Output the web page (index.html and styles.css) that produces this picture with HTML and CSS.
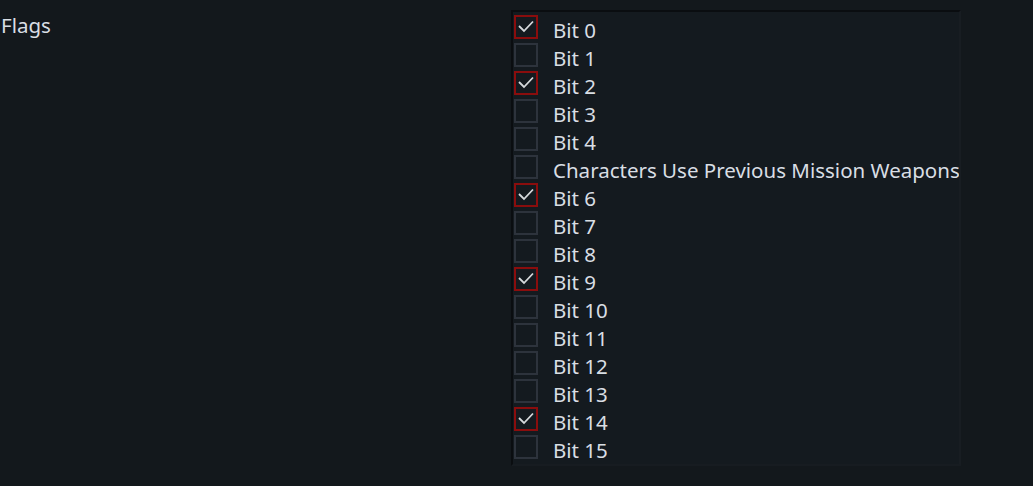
FILE: index.html
```html
<!DOCTYPE html>
<html>
<head>
<meta charset="utf-8">
<link rel="stylesheet" href="styles.css">
</head>
<body>
<div class="field">
  <div class="label">Flags</div>
  <div class="list">
    <label class="item"><span class="box checked"><svg viewBox="0 0 20 20"><polyline points="3,9 8,14 17,4.5"/></svg></span><span class="text">Bit 0</span></label>
    <label class="item"><span class="box"></span><span class="text">Bit 1</span></label>
    <label class="item"><span class="box checked"><svg viewBox="0 0 20 20"><polyline points="3,9 8,14 17,4.5"/></svg></span><span class="text">Bit 2</span></label>
    <label class="item"><span class="box"></span><span class="text">Bit 3</span></label>
    <label class="item"><span class="box"></span><span class="text">Bit 4</span></label>
    <label class="item"><span class="box"></span><span class="text">Characters Use Previous Mission Weapons</span></label>
    <label class="item"><span class="box checked"><svg viewBox="0 0 20 20"><polyline points="3,9 8,14 17,4.5"/></svg></span><span class="text">Bit 6</span></label>
    <label class="item"><span class="box"></span><span class="text">Bit 7</span></label>
    <label class="item"><span class="box"></span><span class="text">Bit 8</span></label>
    <label class="item"><span class="box checked"><svg viewBox="0 0 20 20"><polyline points="3,9 8,14 17,4.5"/></svg></span><span class="text">Bit 9</span></label>
    <label class="item"><span class="box"></span><span class="text">Bit 10</span></label>
    <label class="item"><span class="box"></span><span class="text">Bit 11</span></label>
    <label class="item"><span class="box"></span><span class="text">Bit 12</span></label>
    <label class="item"><span class="box"></span><span class="text">Bit 13</span></label>
    <label class="item"><span class="box checked"><svg viewBox="0 0 20 20"><polyline points="3,9 8,14 17,4.5"/></svg></span><span class="text">Bit 14</span></label>
    <label class="item"><span class="box"></span><span class="text">Bit 15</span></label>
  </div>
</div>
</body>
</html>
```
FILE: styles.css
```css
html, body {
  margin: 0;
  padding: 0;
  background: #13181c;
  color: #d9dee4;
  font-family: "Noto Sans", "Open Sans", sans-serif;
  font-size: 20.5px;
}
.field {
  display: flex;
  align-items: flex-start;
  padding-top: 10px;
}
.label {
  width: 510px;
  padding-left: 1px;
  margin-top: 1px;
  line-height: 28px;
  flex: none;
}
.list {
  width: 446px;
  height: 449px;
  overflow: hidden;
  background: #141a1f;
  border-top: 2px solid #0a0d10;
  border-left: 2px solid #0a0d10;
  border-right: 2px solid #181d22;
  border-bottom: 2px solid #171c21;
  padding-top: 3px;
}
.item {
  display: flex;
  align-items: flex-start;
  height: 28px;
  white-space: nowrap;
}
.box {
  flex: none;
  width: 20px;
  height: 20px;
  margin-left: 1px;
  border: 2px solid #2d333c;
  display: flex;
}
.box.checked {
  border-color: #8a0d0d;
}
.box svg {
  width: 20px;
  height: 20px;
}
.box svg polyline {
  fill: none;
  stroke: #d6d9dc;
  stroke-width: 1.8;
}
.text {
  margin-left: 15px;
  padding-top: 1px;
  line-height: 28px;
}
```
